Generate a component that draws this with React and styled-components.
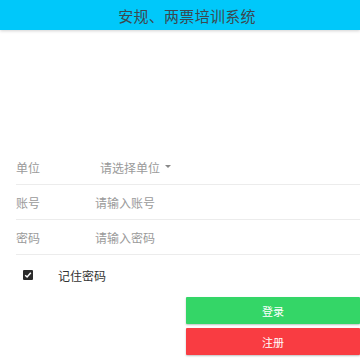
import React from 'react'
import styled, { createGlobalStyle } from 'styled-components'

const Global = createGlobalStyle`
    html, body {
        margin: 0;
        padding: 0;
        background: #fff;
        font-family: "Noto Sans CJK SC", "Noto Sans", sans-serif;
    }
`

const App = () => {
    return (
        <Page>
            <Global />
            <Header>
                <Title>安规、两票培训系统</Title>
            </Header>

            <Form>
                <Row>
                    <Label>单位</Label>
                    <Select>
                        <span>请选择单位</span>
                        <Caret />
                    </Select>
                </Row>
                <Row>
                    <Label>账号</Label>
                    <Input placeholder="请输入账号" />
                </Row>
                <Row>
                    <Label>密码</Label>
                    <Input type="password" placeholder="请输入密码" />
                </Row>
            </Form>

            <Remember>
                <CheckBox>
                    <svg width="8" height="8" viewBox="0 0 8 8">
                        <path d="M1.2 4.2 L3.1 6 L6.8 1.8" fill="none" stroke="#fff" strokeWidth="1.5" />
                    </svg>
                </CheckBox>
                <RememberText>记住密码</RememberText>
            </Remember>

            <Buttons>
                <Button color="#34d667">登录</Button>
                <Button color="#f93c42">注册</Button>
            </Buttons>
        </Page>
    )
}

const Page = styled.div`
    width: 360px;
    height: 360px;
    overflow: hidden;
`

const Header = styled.header`
    height: 30px;
    background: #00c8fa;
    display: flex;
    align-items: center;
    justify-content: center;
    box-shadow: 0 1px 3px rgba(0, 0, 0, 0.18);
`

const Title = styled.div`
    font-size: 15px;
    color: #3d4850;
    margin-left: 14px;
    letter-spacing: 0.3px;
`

const Form = styled.div`
    margin-top: 120px;
    margin-left: 16px;
`

const Row = styled.div`
    height: 34px;
    display: flex;
    align-items: center;
    border-bottom: 1px solid #ececec;
`

const Label = styled.div`
    width: 79px;
    font-size: 12px;
    color: #9a9a9a;
`

const Select = styled.div`
    display: flex;
    align-items: center;
    margin-left: 5px;
    font-size: 12px;
    color: #9a9a9a;
`

const Caret = styled.span`
    margin-left: 5px;
    width: 0;
    height: 0;
    border-left: 3px solid transparent;
    border-right: 3px solid transparent;
    border-top: 3px solid #888;
    margin-top: -2px;
`

const Input = styled.input`
    border: none;
    outline: none;
    padding: 0;
    background: transparent;
    font-family: inherit;
    font-size: 12px;
    color: #333;
    width: 200px;
    &::placeholder {
        color: #9a9a9a;
    }
`

const Remember = styled.div`
    display: flex;
    align-items: center;
    height: 20px;
    margin-top: 10px;
    padding-left: 23px;
`

const CheckBox = styled.span`
    width: 10px;
    height: 10px;
    border-radius: 1px;
    background: #2b2b2b;
    display: flex;
    align-items: center;
    justify-content: center;
`

const RememberText = styled.span`
    margin-left: 25px;
    font-size: 12px;
    color: #333;
`

const Buttons = styled.div`
    margin-top: 12px;
    margin-left: 186px;
    display: flex;
    flex-direction: column;
    gap: 4px;
`

const Button = styled.div`
    height: 27px;
    background: ${p => p.color};
    color: #fff;
    font-size: 11px;
    display: flex;
    align-items: center;
    justify-content: center;
    box-shadow: 0 1px 2px rgba(0, 0, 0, 0.25);
    border-radius: 1px;
`

export default App
